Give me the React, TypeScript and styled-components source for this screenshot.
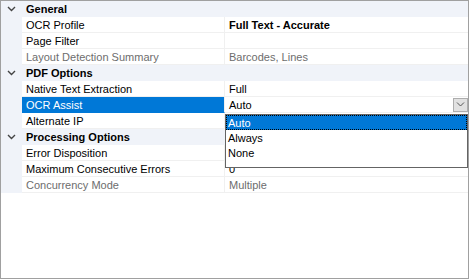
import styled, { createGlobalStyle } from "styled-components";

const GlobalStyle = createGlobalStyle`
    html, body {
        margin: 0;
        padding: 0;
        background: #ffffff;
    }
    body {
        font-family: "Liberation Sans", Arial, sans-serif;
        font-size: 11px;
    }
`;

const Frame = styled.div`
    position: relative;
    width: 469px;
    height: 279px;
    box-sizing: border-box;
    border: 1px solid #a0a0a0;
    background: #ffffff;
    overflow: hidden;
`;

const Grid = styled.div`
    display: flex;
    flex-direction: column;
`;

const CategoryRow = styled.div`
    display: flex;
    align-items: center;
    height: 16px;
    background: #f0f3f9;
`;

const Gutter = styled.div`
    display: flex;
    align-items: center;
    justify-content: center;
    width: 21px;
    height: 100%;
    flex-shrink: 0;
    background: #f0f3f9;
`;

const CategoryTitle = styled.div`
    padding-left: 4px;
    font-weight: 700;
    color: #000000;
`;

const Row = styled.div`
    display: flex;
    height: 16px;
`;

const NameCell = styled.div<{ $selected?: boolean; $disabled?: boolean }>`
    display: flex;
    align-items: center;
    width: 203px;
    flex-shrink: 0;
    box-sizing: border-box;
    padding-left: 4px;
    border-right: 1px solid #f0f0f0;
    border-bottom: 1px solid ${(p) => (p.$selected ? "#0078d7" : "#f0f0f0")};
    background: ${(p) => (p.$selected ? "#0078d7" : "#ffffff")};
    color: ${(p) => (p.$selected ? "#ffffff" : p.$disabled ? "#6d6d6d" : "#000000")};
    white-space: nowrap;
`;

const ValueCell = styled.div<{ $bold?: boolean; $disabled?: boolean }>`
    display: flex;
    align-items: center;
    flex: 1;
    box-sizing: border-box;
    padding-left: 4px;
    border-bottom: 1px solid #f0f0f0;
    font-weight: ${(p) => (p.$bold ? 700 : 400)};
    color: ${(p) => (p.$disabled ? "#6d6d6d" : "#000000")};
    white-space: nowrap;
`;

const EditValue = styled.div`
    flex: 1;
`;

const DropButton = styled.div`
    display: flex;
    align-items: center;
    justify-content: center;
    width: 15px;
    height: 14px;
    margin-right: 0;
    box-sizing: border-box;
    border: 1px solid #adadad;
    background: #e1e1e1;
`;

const DropList = styled.div`
    position: absolute;
    left: 224px;
    top: 113px;
    width: 243px;
    height: 54px;
    box-sizing: border-box;
    border: 1px solid #646464;
    background: #ffffff;
    display: flex;
    flex-direction: column;
`;

const ListItem = styled.div<{ $active?: boolean }>`
    display: flex;
    align-items: center;
    height: 15px;
    box-sizing: border-box;
    padding-left: 2px;
    background: ${(p) => (p.$active ? "#0078d7" : "transparent")};
    color: ${(p) => (p.$active ? "#ffffff" : "#000000")};
    outline: ${(p) => (p.$active ? "1px dotted #000000" : "none")};
    outline-offset: -1px;
`;

const Chevron = () => (
    <svg width="9" height="6" viewBox="0 0 9 6">
        <path d="M1 1 L4.5 4.5 L8 1" fill="none" stroke="#444444" strokeWidth="1.4" />
    </svg>
);

const SmallChevron = () => (
    <svg width="9" height="5" viewBox="0 0 9 5">
        <path d="M1 0.5 L4.5 4 L8 0.5" fill="none" stroke="#555555" strokeWidth="1" />
    </svg>
);

type Prop = { name: string; value?: string; bold?: boolean; disabled?: boolean };

const sections: { title: string; props: Prop[] }[] = [
    {
        title: "General",
        props: [
            { name: "OCR Profile", value: "Full Text - Accurate", bold: true },
            { name: "Page Filter" },
            { name: "Layout Detection Summary", value: "Barcodes, Lines", disabled: true },
        ],
    },
    {
        title: "PDF Options",
        props: [
            { name: "Native Text Extraction", value: "Full" },
            { name: "OCR Assist", value: "Auto" },
            { name: "Alternate IP" },
        ],
    },
    {
        title: "Processing Options",
        props: [
            { name: "Error Disposition" },
            { name: "Maximum Consecutive Errors", value: "0" },
            { name: "Concurrency Mode", value: "Multiple", disabled: true },
        ],
    },
];

const PropertyRow = ({ prop }: { prop: Prop }) => {
    const editing = prop.name === "OCR Assist";
    return (
        <Row>
            <Gutter />
            <NameCell $selected={editing} $disabled={prop.disabled}>
                {prop.name}
            </NameCell>
            <ValueCell $bold={prop.bold} $disabled={prop.disabled}>
                {editing ? (
                    <>
                        <EditValue>{prop.value}</EditValue>
                        <DropButton>
                            <SmallChevron />
                        </DropButton>
                    </>
                ) : (
                    prop.value
                )}
            </ValueCell>
        </Row>
    );
};

const App = () => {
    return (
        <Frame>
            <GlobalStyle />
            <Grid>
                {sections.map((s) => (
                    <div key={s.title}>
                        <CategoryRow>
                            <Gutter>
                                <Chevron />
                            </Gutter>
                            <CategoryTitle>{s.title}</CategoryTitle>
                        </CategoryRow>
                        {s.props.map((p) => (
                            <PropertyRow key={p.name} prop={p} />
                        ))}
                    </div>
                ))}
            </Grid>
            <DropList>
                <ListItem $active>Auto</ListItem>
                <ListItem>Always</ListItem>
                <ListItem>None</ListItem>
            </DropList>
        </Frame>
    );
};

export default App;
